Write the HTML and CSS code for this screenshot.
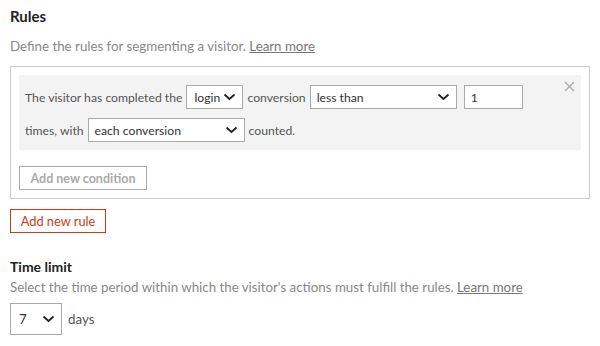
FILE: index.html
```html
<!DOCTYPE html>
<html lang="en">
<head>
    <meta charset="UTF-8">
    <title>Segment rules</title>
    <link rel="stylesheet" href="styles.css">
</head>
<body>
<div class="page">
    <h2 class="title">Rules</h2>
    <p class="hint">Define the rules for segmenting a visitor. <a href="#">Learn more</a></p>

    <div class="rule-box">
        <div class="condition">
            <span class="remove">
                <svg width="11" height="11" viewBox="0 0 11 11"><path d="M1 1L10 10M10 1L1 10" stroke="#aaa" stroke-width="1.4"/></svg>
            </span>
            <div class="row">
                <span>The visitor has completed the</span>
                <div class="select sel-login"><span>login</span>
                    <svg width="13" height="8" viewBox="0 0 13 8"><path d="M1.5 1.5L6.5 6L11.5 1.5" fill="none" stroke="#222" stroke-width="1.8"/></svg>
                </div>
                <span>conversion</span>
                <div class="select sel-compare"><span>less than</span>
                    <svg width="13" height="8" viewBox="0 0 13 8"><path d="M1.5 1.5L6.5 6L11.5 1.5" fill="none" stroke="#222" stroke-width="1.8"/></svg>
                </div>
                <div class="input">1</div>
            </div>
            <div class="row">
                <span>times, with</span>
                <div class="select sel-each"><span>each conversion</span>
                    <svg width="13" height="8" viewBox="0 0 13 8"><path d="M1.5 1.5L6.5 6L11.5 1.5" fill="none" stroke="#222" stroke-width="1.8"/></svg>
                </div>
                <span>counted.</span>
            </div>
        </div>
        <button class="btn btn-disabled">Add new condition</button>
    </div>

    <button class="btn btn-red">Add new rule</button>

    <h3 class="subtitle">Time limit</h3>
    <p class="hint hint-tight">Select the time period within which the visitor's actions must fulfill the rules. <a href="#">Learn more</a></p>
    <div class="row row-days">
        <div class="select sel-days"><span>7</span>
            <svg width="13" height="8" viewBox="0 0 13 8"><path d="M1.5 1.5L6.5 6L11.5 1.5" fill="none" stroke="#222" stroke-width="1.8"/></svg>
        </div>
        <span>days</span>
    </div>
</div>
</body>
</html>
```

FILE: styles.css
```css
body {
    margin: 0;
    font-family: Lato, "Liberation Sans", sans-serif;
    font-size: 12.2px;
    color: #555;
    background: #fff;
}

.page {
    padding: 6px 10px 0 10px;
}

.title {
    margin: 0;
    font-size: 15px;
    font-weight: 700;
    color: #222;
    line-height: 20px;
}

.hint {
    margin: 11px 0 11px 0;
    font-size: 13.3px;
    color: #888;
    line-height: 18px;
}

.hint a {
    color: #777;
}

.hint-tight {
    margin: 0 0 7px 0;
}

.rule-box {
    border: 1px solid #ccc;
    padding: 8px;
    margin-bottom: 10px;
}

.condition {
    position: relative;
    background: #f3f3f3;
    padding: 10px 6px 8px 6px;
    display: flex;
    flex-direction: column;
    gap: 9px;
    margin-bottom: 16px;
}

.remove {
    position: absolute;
    right: 6px;
    top: 6px;
    line-height: 0;
}

.row {
    display: flex;
    align-items: center;
    gap: 4px;
    color: #555;
    white-space: nowrap;
}

.row-days {
    font-size: 13.3px;
}

.select,
.input {
    box-sizing: border-box;
    height: 24px;
    border: 1px solid #aaa;
    background: #fff;
    color: #333;
    display: flex;
    align-items: center;
    justify-content: space-between;
    padding: 0 6px;
}

.sel-login { width: 57px; padding: 0 6px 0 7px; }
.sel-compare { width: 147px; }
.input { width: 59px; margin-left: 3px; }
.sel-each { width: 157px; }
.sel-days { width: 52px; height: 32px; padding: 0 6px 0 8px; margin-right: 2px; }

.btn {
    font-family: inherit;
    font-size: 12.5px;
    height: 24px;
    background: #fff;
    cursor: pointer;
    display: block;
    white-space: nowrap;
    padding: 0;
}

.btn-disabled {
    border: 1px solid #aaa;
    color: #aaa;
    font-weight: 700;
    width: 128px;
}

.btn-red {
    border: 1px solid #cf3a17;
    color: #cf3a17;
    font-size: 12.8px;
    width: 96px;
}

.subtitle {
    margin: 24px 0 1px 0;
    font-size: 14px;
    font-weight: 700;
    color: #222;
    line-height: 20px;
}
```
